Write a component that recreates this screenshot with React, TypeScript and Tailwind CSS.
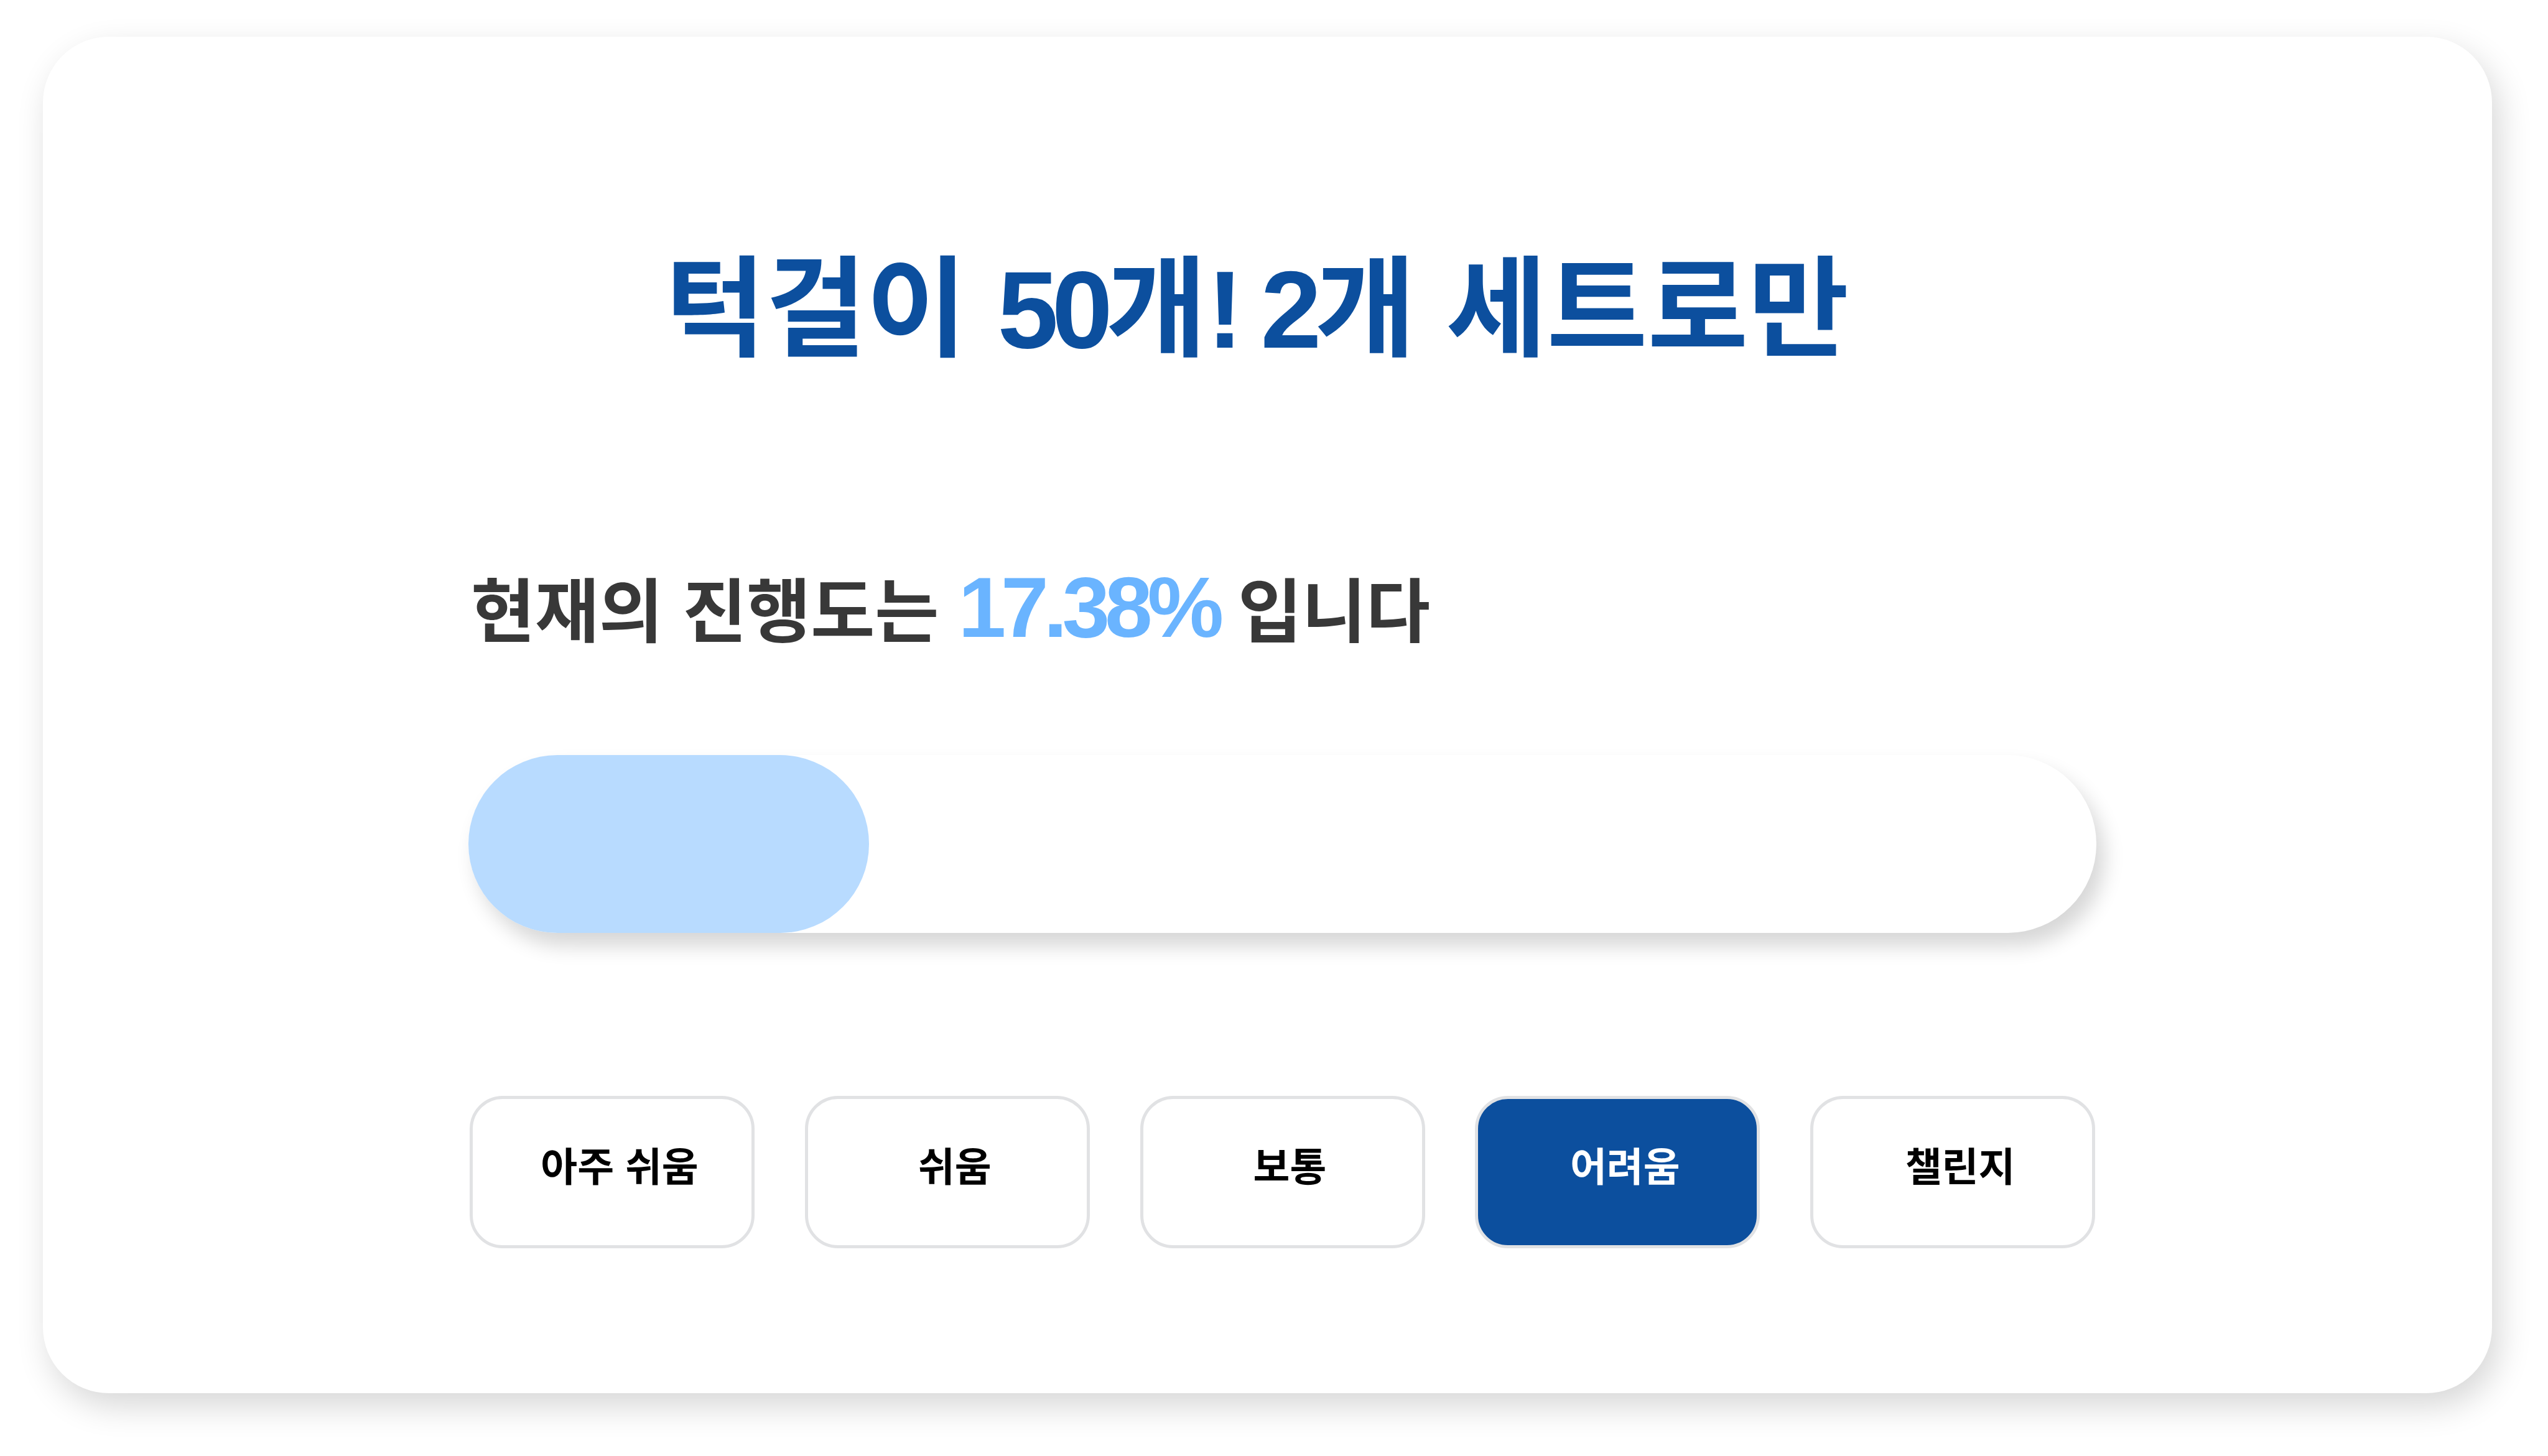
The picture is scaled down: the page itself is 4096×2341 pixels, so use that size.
import { useState, type ReactNode } from "react";

const levels = ["아주 쉬움", "쉬움", "보통", "어려움", "챌린지"];

function Figures({ children }: { children: ReactNode }) {
  return <span className="tracking-[-0.06em]">{children}</span>;
}

export default function App() {
  const [selected, setSelected] = useState("어려움");

  return (
    <div className="flex min-h-screen bg-white pt-[59px] pr-[90px] pb-[101px] pl-[69px] font-['Liberation_Sans','Noto_Sans_CJK_KR',sans-serif] font-bold">
      <main className="flex-1 rounded-[106px] bg-white pt-[351px] shadow-[11px_21px_53px_rgba(0,0,0,0.16)]">
        <h1 className="pr-[34px] text-center text-[176px] leading-[176px] text-[#0c4f9e]">
          턱걸이 <Figures>50</Figures>개<Figures>! 2</Figures>개 세트로만
        </h1>
        <section className="mt-[321px] pr-[636px] pl-[684px]">
          <p className="pl-1 text-[112px] leading-[138px] text-[#383838]">
            현재의 진행도는{" "}
            <span className="text-[138px] text-[#6ab4ff]">
              <Figures>17.38%</Figures>
            </span>{" "}
            입니다
          </p>
          <div
            role="progressbar"
            aria-label="진행도"
            aria-valuenow={17.38}
            className="mt-[159px] h-[286px] rounded-full bg-white shadow-[13px_21px_32px_rgba(0,0,0,0.16)]"
          >
            <div className="h-full w-[644px] rounded-full bg-[#b8dbff]" />
          </div>
          <div className="mt-[262px] flex justify-between px-[2px]">
            {levels.map((level) => (
              <button
                key={level}
                type="button"
                aria-pressed={level === selected}
                onClick={() => setSelected(level)}
                className={`h-[245px] w-[458px] rounded-[53px] border-[5px] border-[#e1e2e4] pb-[16px] pl-[24px] text-[64px] leading-[80px] ${
                  level === selected ? "bg-[#0c4f9e] text-white" : "bg-white text-black"
                }`}
              >
                {level}
              </button>
            ))}
          </div>
        </section>
      </main>
    </div>
  );
}
